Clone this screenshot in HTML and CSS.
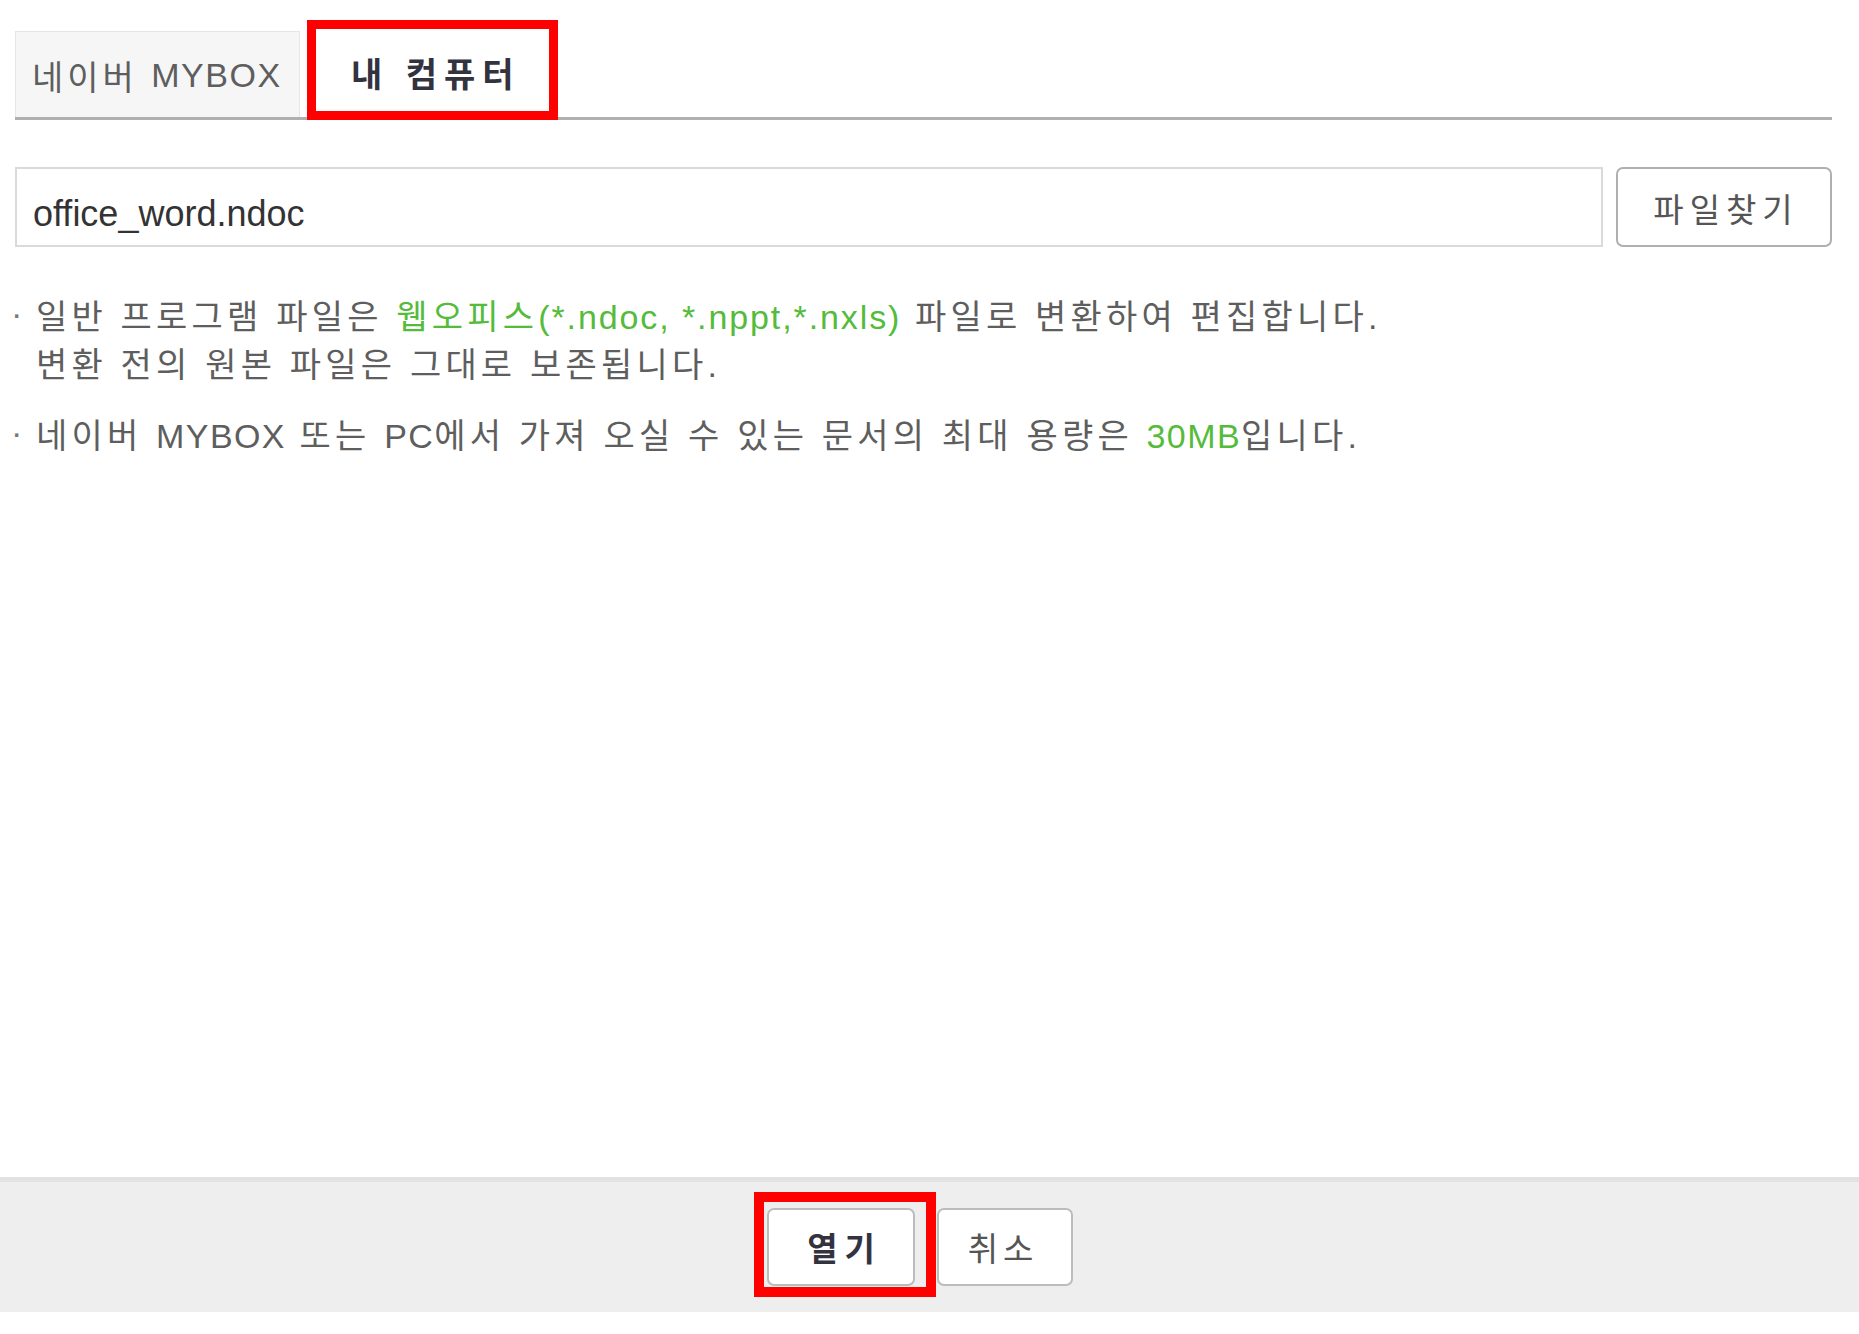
FILE: index.html
```html
<!DOCTYPE html>
<html lang="ko">
<head>
    <meta charset="UTF-8">
    <meta name="viewport" content="width=device-width, initial-scale=1.0">
    <title>문서 열기</title>
    <link rel="stylesheet" href="styles.css">
</head>
<body>
    <div id="dialog">
        <div id="content">
            <!-- tabs: MYBOX / my computer -->
            <div class="tabs">
                <div class="tab">네이버 <span class="en">MYBOX</span></div>
                <div class="tab tab-active">내 컴퓨터</div>
            </div>

            <div class="file-row">
                <div class="file-input">office_word.ndoc</div>
                <span class="btn btn-find">파일찾기</span>
            </div>

            <!-- latin runs get their own span: hangul is spaced wider -->
            <ul class="notes">
                <li>
                    <span class="dot">·</span>
                    <p>일반 프로그램 파일은 <span class="green">웹오피스<span class="en ext">(*.ndoc, *.nppt,*.nxls)</span></span> 파일로 변환하여 편집합니다.<br>변환 전의 원본 파일은 그대로 보존됩니다.</p>
                </li>
                <li>
                    <span class="dot">·</span>
                    <p>네이버 <span class="en">MYBOX</span> 또는 <span class="en">PC</span>에서 가져 오실 수 있는 문서의 최대 용량은 <span class="green en">30MB</span>입니다.</p>
                </li>
            </ul>
        </div>

        <!-- bottom bar -->
        <div id="footer">
            <span class="btn btn-open">열기</span>
            <span class="btn btn-cancel">취소</span>
        </div>
    </div>
</body>
</html>
```

FILE: styles.css
```css
/* open document dialog */
    body {
        margin: 0;
        font-family: "Liberation Sans", "Noto Sans CJK KR", sans-serif;
        color: #5e5e5e;
        background-color: white;
    }
    #dialog {
        display: flex;
        flex-direction: column;
        height: 1334px;
    }
    #content {
        flex: 1;
        margin-left: 15px;
        margin-right: 27px;
    }
    .tabs {
        display: flex;
        align-items: flex-end;
        padding-top: 20px;
        border-bottom: 3px solid #b0b0b0;
    }
    .tab {
        box-sizing: border-box;
        width: 285px;
        height: 86px;
        padding-left: 16px;
        padding-top: 2px;
        display: flex;
        align-items: center;
        white-space: pre;
        background-color: #f6f6f7;
        border: 1px solid #e6e6e6;
        border-bottom: none;
        font-size: 34px;
        letter-spacing: 4px;
        color: #5e5e5e;
    }
    .tab .en {
        letter-spacing: 1.5px;
    }
    .tab-active {
        position: relative;
        width: 251px;
        height: 100px;
        margin-left: 7px;
        margin-bottom: -3px;
        padding-left: 35px;
        padding-top: 4px;
        background-color: white;
        border: 9px solid #ff0000;
        font-weight: bold;
        letter-spacing: 7px;
        color: #333340;
    }
    .file-row {
        display: flex;
        gap: 13px;
        margin-top: 47px;
        height: 80px;
    }
    .file-input {
        flex: 1;
        box-sizing: border-box;
        display: flex;
        align-items: center;
        padding-left: 16px;
        padding-top: 14px;
        border: 2px solid #dadada;
        font-size: 36px;
        color: #333;
    }
    .btn {
        box-sizing: border-box;
        display: flex;
        align-items: center;
        justify-content: center;
        background-color: white;
        border: 2px solid #b0b0b0;
        border-radius: 7px;
        font-size: 33px;
        color: #555;
    }
    .btn-find {
        width: 216px;
        letter-spacing: 6px;
        padding-left: 4px;
        padding-top: 2px;
    }
    .notes {
        list-style: none;
        margin: 46px 0 0 0;
        padding: 0;
        font-size: 34px;
        line-height: 48px;
        letter-spacing: 4.2px;
    }
    .notes .en {
        letter-spacing: 1.4px;
    }
    .notes .ext {
        letter-spacing: 1.9px;
    }
    .notes li {
        display: flex;
        margin-bottom: 23px;
    }
    .notes p {
        margin: 0;
    }
    .dot {
        width: 25px;
        flex-shrink: 0;
        margin-left: -4px;
        margin-top: -4px;
        color: #777;
    }
    .green {
        color: #55bb3a;
    }
    #footer {
        display: flex;
        justify-content: center;
        align-items: center;
        gap: 22px;
        height: 130px;
        margin-bottom: 22px;
        padding-right: 19px;
        background-color: #eeeeee;
        border-top: 5px solid #e2e2e2;
    }
    .btn-open,
    .btn-cancel {
        height: 78px;
        font-size: 33px;
        border-color: #bcbcbc;
    }
    .btn-open {
        position: relative;
        width: 148px;
        letter-spacing: 7px;
        padding-left: 7px;
        font-weight: bold;
        color: #333340;
    }
    .btn-cancel {
        width: 136px;
        letter-spacing: 5px;
        padding-right: 4px;
    }
    /* red highlight round the open button */
    .btn-open::after {
        content: "";
        position: absolute;
        top: -18px;
        left: -15px;
        right: -23px;
        bottom: -13px;
        border: 10px solid #ff0000;
    }
```
